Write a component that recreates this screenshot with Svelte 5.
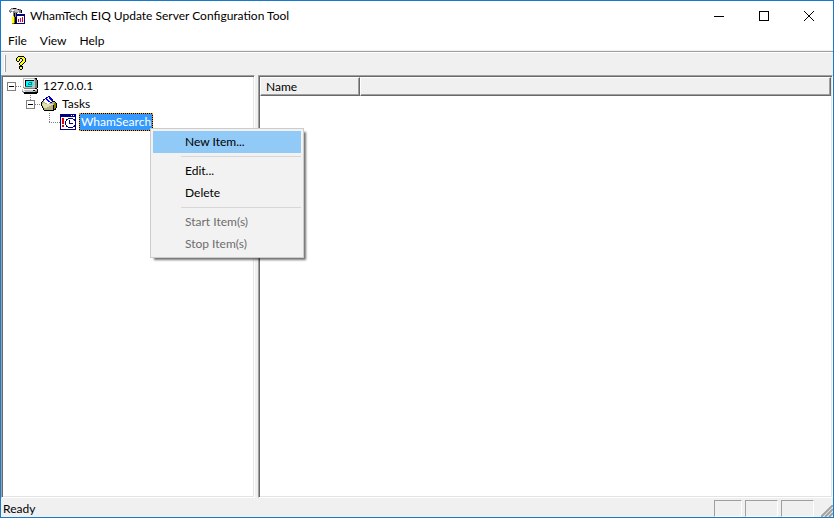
<script>
	const palette = {
		k: '#000000',
		w: '#ffffff',
		g: '#808080',
		s: '#c0c0c0',
		y: '#ffff00',
		o: '#808000',
		n: '#000080',
		b: '#0000ff',
		c: '#00ffff',
		t: '#008080',
		r: '#e00000',
		p: '#c000a0',
		l: '#e0e0b0',
		h: '#b0b080'
	};

	const icons = {
		app: [
			'..ggkkkg........',
			'.gssssssgkgg....',
			'gsswwsssssggk...',
			'gggsggssssggk...',
			'.g..ggggg.ggk...',
			'....gkgk........',
			'....gkgnnnnnnnnn',
			'....gkgnnnnnnnnn',
			'....ykgnwwwwwwwn',
			'...yyoknwwwwwrwn',
			'...yyoknwwwpwrwn',
			'...yyoknwrwpwrwn',
			'...yyoknwrwpwrwn',
			'...yyoknwrwpwrwn',
			'...yyoknwwwwwwwn',
			'...ookknnnnnnnnn'
		],
		help: [
			'................',
			'.....kkkkkk.....',
			'....kyyyyyyk....',
			'...kyyykkyyyk...',
			'...kyyk..kyyk...',
			'...kyyk..kyyk...',
			'....kk..kyyyk...',
			'.......kyyyk....',
			'......kyyyk.....',
			'......kyyk......',
			'.......kk.......',
			'......kkkk......',
			'......kyyk......',
			'......kyyk......',
			'.......kk.......',
			'................'
		],
		computer: [
			'.sssssssssssgkk.',
			'.swwwwwwwwwwsgk.',
			'.swkkkkkkkkksggk',
			'.swkcccccccssggk',
			'.swkccctttcssggk',
			'.swkcctcctcssggk',
			'.swkccttttcssggk',
			'.swkcccccccssggk',
			'.swtttttttsssggk',
			'.gsssssssssssggk',
			'..gggggggggggkk.',
			'swwwwwwwwwwwwwsk',
			'swssssssssskkssk',
			'gswssssssssssggk',
			'.gkkkkkkkkkkkkkk',
			'..kkkkkkkkkkkkk.'
		],
		folder: [
			'.......nn.......',
			'.....nnwbn......',
			'....nbwwbbn.....',
			'..nnwbbwwbbn....',
			'..nwwwbbwwbn....',
			'.khwwwwbbwwnkk..',
			'khhhwwwwwbnhhhk.',
			'khllhhwwhhhhhook',
			'klllllllllllhook',
			'khllllllllhhkook',
			'.kllllllhhhhkook',
			'.khlllhhhhhhkook',
			'..khhhhhhhhhkok.',
			'..khhhhhhhhhkkk.',
			'...kkkkkkkkkk...',
			'................'
		],
		task: [
			'nnnnnnnnnnnnnnnn',
			'nnnnnnnnnnnwnwnn',
			'nnnnnnnnnnnnnnnn',
			'nwwwwwwwwwwwwwwn',
			'nwrrwwwwnnnnnwwn',
			'nwrrwwnnwwwwwnnn',
			'nwrrwwnwwnwwwwnn',
			'nwrrwnwwwnwwwwwn',
			'nwrrwnwwwnwwwwwn',
			'nwrrwnwwwnnnnwwn',
			'nwwwwnwwwwwwwwwn',
			'nwrrwwnwwwwwwwnn',
			'nwrrwwnnwwwwwnnn',
			'nwwwwwwwnnnnnwwn',
			'nwwwwwwwwwwwwwwn',
			'nnnnnnnnnnnnnnnn'
		]
	};

	const menus = ['File', 'View', 'Help'];

	const contextMenu = [
		[{ label: 'New Item...', active: true }],
		[{ label: 'Edit...' }, { label: 'Delete' }],
		[
			{ label: 'Start Item(s)', disabled: true },
			{ label: 'Stop Item(s)', disabled: true }
		]
	];
</script>

{#snippet icon(name)}
	<svg class="icon" viewBox="0 0 16 16" shape-rendering="crispEdges" aria-hidden="true">
		{#each icons[name] as row, y}
			{#each row.split('') as cell, x}
				{#if cell !== '.'}
					<rect {x} {y} width="1" height="1" fill={palette[cell]} />
				{/if}
			{/each}
		{/each}
	</svg>
{/snippet}

{#snippet expander()}
	<button class="expander" aria-label="Collapse">
		<svg viewBox="0 0 9 9" shape-rendering="crispEdges">
			<path d="M0.5 0.5h8v8h-8z" fill="#fff" stroke="#808080" />
			<path d="M2 4.5h5" stroke="#000" />
		</svg>
	</button>
{/snippet}

<div class="window">
	<header class="titlebar">
		{@render icon('app')}
		<h1>WhamTech EIQ Update Server Configuration Tool</h1>
		<div class="controls">
			<button aria-label="Minimize">
				<svg viewBox="0 0 10 10" shape-rendering="crispEdges"><path d="M0 5.5h10" stroke="#000" /></svg>
			</button>
			<button aria-label="Maximize">
				<svg viewBox="0 0 10 10" shape-rendering="crispEdges"><path d="M0.5 0.5h9v9h-9z" fill="none" stroke="#000" /></svg>
			</button>
			<button aria-label="Close">
				<svg viewBox="0 0 10 10"><path d="M0 0l10 10M10 0L0 10" stroke="#000" /></svg>
			</button>
		</div>
	</header>

	<nav class="menubar">
		{#each menus as menu}
			<button>{menu}</button>
		{/each}
	</nav>

	<div class="toolbar">
		<span class="gripper"></span>
		<button aria-label="About">{@render icon('help')}</button>
	</div>

	<main>
		<div class="pane tree" role="tree">
			<div class="row" role="treeitem" aria-selected="false">
				{@render expander()}
				<span class="dots short"></span>
				{@render icon('computer')}
				<span class="label">127.0.0.1</span>
			</div>
			<div class="row level1" role="treeitem" aria-selected="false">
				<span class="stem"></span>
				{@render expander()}
				<span class="dots short"></span>
				{@render icon('folder')}
				<span class="label">Tasks</span>
			</div>
			<div class="row level2" role="treeitem" aria-selected="true">
				<span class="stem tall"></span>
				<span class="dots"></span>
				{@render icon('task')}
				<span class="label selected">WhamSearch</span>
			</div>
		</div>

		<div class="pane list">
			<table>
				<thead>
					<tr>
						<th class="name">Name</th>
						<th aria-label="Empty"></th>
					</tr>
				</thead>
			</table>
		</div>
	</main>

	<footer class="statusbar">
		<span class="message">Ready</span>
		<span class="indicator"></span>
		<span class="indicator wide"></span>
		<span class="indicator wide"></span>
		<svg class="grip" viewBox="0 0 12 12">
			<path d="M0 12L12 0M4 12L12 4M8 12L12 8" stroke="#a0a0a0" stroke-width="2" />
		</svg>
	</footer>

	<div class="context" role="menu">
		{#each contextMenu as group, i}
			{#if i > 0}
				<hr />
			{/if}
			{#each group as item}
				<button role="menuitem" class:active={item.active} disabled={item.disabled}>{item.label}</button>
			{/each}
		{/each}
	</div>
</div>

<style>
:global(body) {
  background: #fff;
}

.window {
  position: relative;
  display: flex;
  flex-direction: column;
  box-sizing: border-box;
  height: 100vh;
  border: 1px solid #1979ca;
  background: #f0f0f0;
  color: #000;
  font-family: Lato, 'Open Sans', sans-serif;
  font-size: 12px;
  line-height: 18px;
  overflow: hidden;
}

button {
  padding: 0;
  border: 0;
  background: none;
  color: inherit;
  font: inherit;
}

svg {
  display: block;
}

.icon {
  flex: none;
  width: 16px;
  height: 16px;
}

.titlebar {
  display: flex;
  align-items: center;
  height: 29px;
  padding: 0 2px 0 8px;
  background: #fff;
}

h1 {
  flex: 1;
  margin: 0 0 0 5px;
  font-size: 12px;
  font-weight: 400;
}

.controls {
  display: flex;
}

.controls button {
  display: flex;
  align-items: center;
  justify-content: center;
  width: 45px;
  height: 29px;
}

.controls svg {
  width: 10px;
  height: 10px;
}

.menubar {
  display: flex;
  height: 19px;
  padding-top: 1px;
  background: #fff;
}

.menubar button {
  padding: 0 6px 0 7px;
}

.toolbar {
  display: flex;
  align-items: center;
  height: 22px;
  margin-top: 1px;
  padding: 0 0 1px 3px;
  border-top: 1px solid #a0a0a0;
  box-shadow: inset 0 1px #fff;
}

.gripper {
  width: 1px;
  height: 17px;
  border-right: 1px solid #a0a0a0;
  background: #fff;
}

.toolbar button {
  margin-left: 7px;
}

main {
  flex: 1;
  display: flex;
  gap: 3px;
  min-height: 0;
}

.pane {
  box-sizing: border-box;
  background: #fff;
  border: 1px solid;
  border-color: #a0a0a0 #fff #fff #a0a0a0;
  box-shadow: inset 1px 1px #696969, inset -1px -1px #e3e3e3;
}

.tree {
  flex: 0 0 254px;
  padding: 1px 5px;
}

.row {
  position: relative;
  display: flex;
  align-items: center;
  height: 18px;
}

.level1 {
  padding-left: 19px;
}

.level2 {
  padding-left: 42px;
}

.expander {
  width: 9px;
  height: 9px;
}

.dots {
  width: 11px;
  height: 1px;
  background: repeating-linear-gradient(90deg, #808080 0 1px, #fff 1px 2px);
}

.dots.short {
  width: 6px;
}

.stem {
  position: absolute;
  top: 0;
  left: 23px;
  width: 1px;
  height: 5px;
  background: repeating-linear-gradient(#808080 0 1px, #fff 1px 2px);
}

.stem.tall {
  left: 42px;
  height: 9px;
}

.label {
  margin-left: 3px;
  padding: 0 2px;
  line-height: 16px;
}

.selected {
  padding: 0 1px;
  border: 1px dotted #ff8c1a;
  background: linear-gradient(#3399ff, #3399ff) padding-box, #000 border-box;
  color: #fff;
}

.list {
  flex: 1;
  padding: 1px;
}

table {
  width: 100%;
  border-collapse: separate;
  border-spacing: 0;
  table-layout: fixed;
}

th {
  box-sizing: border-box;
  height: 19px;
  padding: 0 5px;
  border: 1px solid;
  border-color: #fff #696969 #696969 #fff;
  background: #f0f0f0;
  box-shadow: inset -1px -1px #a0a0a0;
  font-weight: 400;
  line-height: 17px;
  text-align: left;
}

.name {
  width: 100px;
}

.statusbar {
  display: flex;
  gap: 3px;
  height: 19px;
}

.message {
  flex: 1;
  padding: 2px;
  line-height: 18px;
}

.indicator {
  box-sizing: border-box;
  width: 28px;
  height: 17px;
  margin-top: 2px;
  border: 1px solid;
  border-color: #a0a0a0 #fff #fff #a0a0a0;
}

.indicator.wide {
  width: 33px;
}

.grip {
  align-self: flex-end;
  width: 12px;
  height: 12px;
  margin-left: 4px;
}

.context {
  position: absolute;
  top: 127px;
  left: 149px;
  box-sizing: border-box;
  width: 154px;
  padding: 2px;
  border: 1px solid #ccc;
  background: #f2f2f2;
  box-shadow: 3px 3px 2px -1px rgba(0, 0, 0, 0.55);
}

.context button {
  display: block;
  width: 100%;
  height: 22px;
  padding-left: 32px;
  text-align: left;
}

.context button.active {
  background: #91c9f7;
}

.context button:disabled {
  color: #6d6d6d;
}

hr {
  height: 1px;
  margin: 3px 0 3px 28px;
  border: 0;
  background: #d7d7d7;
}
</style>
